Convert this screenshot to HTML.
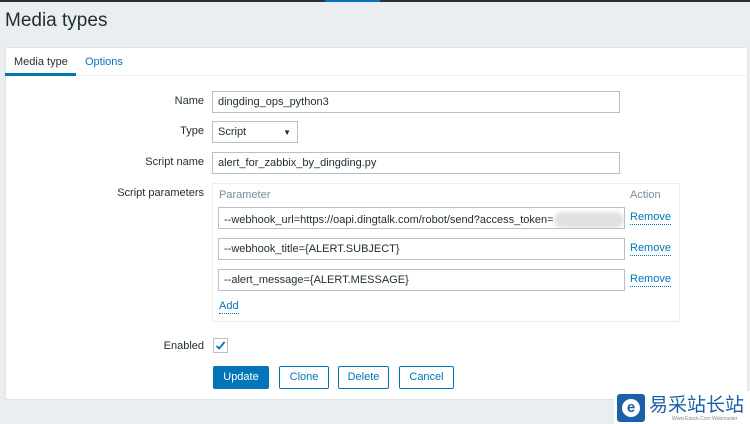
<!DOCTYPE html>
<html><head><meta charset="utf-8"><style>
*{box-sizing:border-box;margin:0;padding:0}
body{width:750px;height:424px;background:#ebeef0;font-family:"Liberation Sans",Arial,sans-serif;font-size:11px;color:#1f2c33;position:relative;overflow:hidden}
.abs{position:absolute}
.top{left:0;top:0;width:750px;height:2px;background:#24333d}
.topb{left:325px;top:0;width:55px;height:2px;background:#0275b8}
h1{position:absolute;left:5px;top:10px;font-size:19px;font-weight:normal;color:#1f2c33}
.panel{left:5px;top:47px;width:743px;height:353px;background:#fff;border:1px solid #dfe4e7}
.tabline{left:5px;top:75px;width:743px;height:1px;background:#ebeef0}
.lbl{text-align:right;width:200px;left:4px}
.inp{border:1px solid #b7c0c6;background:#fff;height:22px;padding:4px 5px;line-height:13px;white-space:nowrap;overflow:hidden}
a,.lnk{color:#0275b8}
.rm{border-bottom:1px dotted #0275b8;line-height:13px}
.btn{height:23px;border:1px solid #0275b8;border-radius:2px;color:#0275b8;text-align:center;line-height:21px;background:#fff}
</style></head><body>
<div class="abs top"></div><div class="abs topb"></div>
<h1>Media types</h1>
<div class="abs panel"></div>
<div class="abs" style="left:14px;top:56px">Media type</div>
<div class="abs lnk" style="left:85px;top:56px">Options</div>
<div class="abs tabline"></div>
<div class="abs" style="left:5px;top:73px;width:71px;height:3px;background:#0275b8"></div>

<div class="abs lbl" style="top:95px">Name</div>
<div class="abs inp" style="left:212px;top:91px;width:408px">dingding_ops_python3</div>
<div class="abs lbl" style="top:125px">Type</div>
<div class="abs inp" style="left:212px;top:121px;width:86px">Script<span style="position:absolute;right:6px;top:4px;font-size:8px">▼</span></div>
<div class="abs lbl" style="top:156px">Script name</div>
<div class="abs inp" style="left:212px;top:152px;width:408px">alert_for_zabbix_by_dingding.py</div>
<div class="abs lbl" style="top:187px">Script parameters</div>
<div class="abs" style="left:212px;top:183px;width:468px;height:139px;border:1px solid #ebeef0"></div>
<div class="abs" style="left:219px;top:189px;color:#768d99">Parameter</div>
<div class="abs" style="left:630px;top:189px;color:#768d99">Action</div>
<div class="abs inp" style="left:218px;top:207px;width:407px">--webhook_url=https://oapi.dingtalk.com/robot/send?access_token=<span style="display:inline-block;width:70px;height:16px;background:#e0e0e0;border-radius:8px;vertical-align:middle;filter:blur(2px)"></span></div>
<div class="abs lnk rm" style="left:630px;top:211px">Remove</div>
<div class="abs inp" style="left:218px;top:238px;width:407px">--webhook_title={ALERT.SUBJECT}</div>
<div class="abs lnk rm" style="left:630px;top:242px">Remove</div>
<div class="abs inp" style="left:218px;top:269px;width:407px">--alert_message={ALERT.MESSAGE}</div>
<div class="abs lnk rm" style="left:630px;top:273px">Remove</div>
<div class="abs lnk rm" style="left:219px;top:300px">Add</div>

<div class="abs lbl" style="top:340px">Enabled</div>
<div class="abs" style="left:213px;top:338px;width:15px;height:15px;border:1px solid #b7c0c6;background:#fff"><svg width="13" height="13" viewBox="0 0 13 13"><path d="M2.5 7 L5.2 9.5 L10.5 3" stroke="#0275b8" stroke-width="1.8" fill="none"/></svg></div>

<div class="abs btn" style="left:213px;top:366px;width:56px;background:#0275b8;color:#fff">Update</div>
<div class="abs btn" style="left:279px;top:366px;width:50px">Clone</div>
<div class="abs btn" style="left:338px;top:366px;width:51px">Delete</div>
<div class="abs btn" style="left:399px;top:366px;width:55px">Cancel</div>

<div class="abs" style="left:614px;top:391px;width:136px;height:33px;background:#fff"></div>
<div class="abs" style="left:617px;top:394px;width:28px;height:28px;background:#1a5fa8;border-radius:3px"><div style="margin:5px;width:18px;height:18px;border-radius:50%;background:#fff;color:#1a5fa8;font-weight:bold;text-align:center;line-height:18px;font-size:15px">e</div></div>
<div class="abs" style="left:649px;top:393px;font-family:'Noto Sans CJK SC',sans-serif;font-size:19px;line-height:22px;color:#1a5fa8">易采站长站</div>
<div class="abs" style="left:672px;top:416px;font-size:5px;color:#888">Www.Easck.Com Webmaster</div>
</body></html>
